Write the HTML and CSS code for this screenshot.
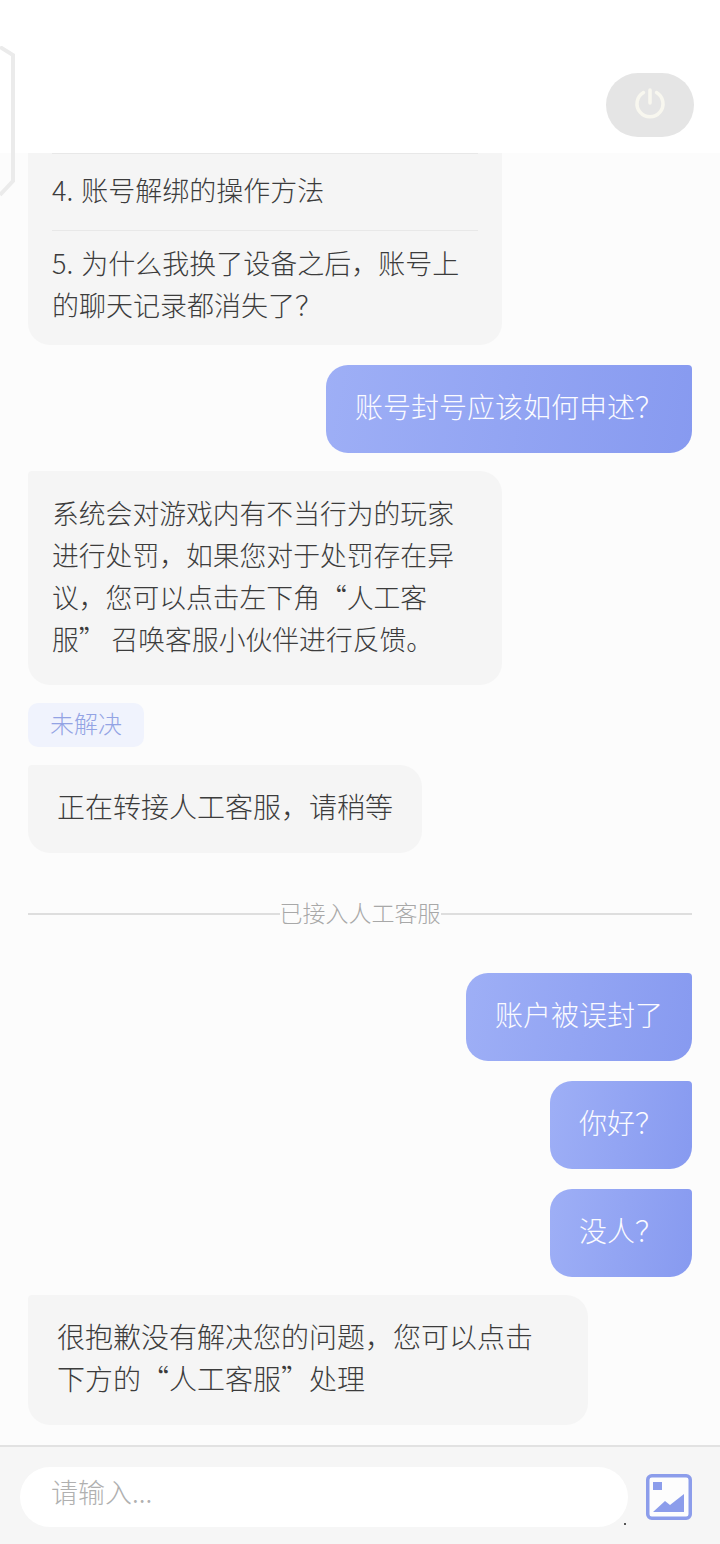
FILE: index.html
```html
<!DOCTYPE html>
<html lang="zh-CN">
<head>
  <meta charset="UTF-8" />
  <meta name="viewport" content="width=device-width, initial-scale=1.0"/>
  <title>客服</title>
  <link rel="stylesheet" href="styles.css">
</head>
<body>
  <div class="page">
    <header class="top-bar">
      <button class="power-btn" aria-label="关闭">
        <svg width="32" height="34" viewBox="0 3 32 34" fill="none" stroke="#f8f7ef" stroke-width="3.5" stroke-linecap="round">
          <path d="M9.5 7.5a13 13 0 1 0 13 0"/>
          <path d="M16 5v13"/>
        </svg>
      </button>
    </header>

    <!-- floating edge tab -->
    <svg class="edge-tab" width="18" height="152" viewBox="0 0 18 152" fill="none" stroke="#ebebeb" stroke-width="4">
      <path d="M0 1l13 8v126L0 149"/>
    </svg>

    <main class="chat">
      <div class="bubble bot list-bubble">
        <div class="list-row">4. 账号解绑的操作方法</div>
        <div class="list-row last">5. 为什么我换了设备之后，账号上的聊天记录都消失了？</div>
      </div>

      <div class="bubble user gap-20">账号封号应该如何申述？</div>

      <div class="bubble bot wide gap-18">系统会对游戏内有不当行为的玩家进行处罚，如果您对于处罚存在异议，您可以点击左下角“人工客服” 召唤客服小伙伴进行反馈。</div>

      <div class="tag gap-18">未解决</div>

      <div class="bubble bot gap-18">正在转接人工客服，请稍等</div>

      <div class="divider"><span>已接入人工客服</span></div>

      <div class="bubble user">账户被误封了</div>
      <div class="bubble user gap-20">你好？</div>
      <div class="bubble user gap-20">没人？</div>

      <div class="bubble bot long gap-18">很抱歉没有解决您的问题，您可以点击下方的“人工客服”处理</div>
    </main>

    <footer class="composer">
      <input class="msg-input" type="text" placeholder="请输入..." />
      <span class="speck"></span>
      <button class="img-btn" aria-label="图片">
        <svg width="46" height="46" viewBox="0 0 46 46" fill="#8c9deb">
          <rect x="1.75" y="1.75" width="42.5" height="42.5" rx="4" fill="#fdfdfd" stroke="#8c9deb" stroke-width="3.5"/>
          <rect x="7" y="8" width="9" height="8"/>
          <path d="M7 38l12-11 5 4 14-11v18z"/>
        </svg>
      </button>
    </footer>
  </div>
</body>
</html>
```

FILE: styles.css
```css
* {
  box-sizing: border-box;
  font-family: "Noto Sans CJK SC", "Noto Sans", sans-serif;
}

body {
  margin: 0;
  background: #fcfcfc;
}

.page {
  position: relative;
  display: flex;
  flex-direction: column;
  width: 720px;
  height: 1544px;
  overflow: hidden;
}

.top-bar {
  flex: none;
  display: flex;
  justify-content: flex-end;
  align-items: flex-start;
  height: 153px;
  padding: 73px 26px 0 0;
  background: #fff;
}

.power-btn {
  display: flex;
  justify-content: center;
  align-items: center;
  width: 88px;
  height: 64px;
  padding: 0;
  border: none;
  border-radius: 32px;
  background: #e5e5e5;
}

.edge-tab {
  position: absolute;
  left: 0;
  top: 46px;
  z-index: 2;
}

.chat {
  flex: 1;
  min-height: 0;
  display: flex;
  flex-direction: column;
  justify-content: flex-end;
  padding: 0 28px 20px;
  overflow: hidden;
}

.chat > * {
  flex: none;
}

/* top padding is smaller than bottom, the CJK font sits low in its line box */
.bubble {
  font-size: 28px;
  font-weight: 300;
  line-height: 42px;
  padding: 20px 29px 26px;
  border-radius: 22px;
}

.bot {
  align-self: flex-start;
  background: #f5f5f5;
  color: #3c3c3c;
  border-top-left-radius: 4px;
}

.user {
  align-self: flex-end;
  background: linear-gradient(100deg, #9eaff6, #879af0);
  color: #fbfbff;
  border-top-right-radius: 4px;
}

.gap-18 {
  margin-top: 18px;
}

.gap-20 {
  margin-top: 20px;
}

.list-bubble {
  width: 474px;
  padding: 20px 24px 19px;
  font-size: 27px;
  word-spacing: 2px;
}

.list-row {
  padding: 15px 0 19px;
  border-top: 1px solid #e8e8e8;
}

.list-row.last {
  padding: 11px 0 0;
}

.wide {
  width: 474px;
  padding: 21px 24px 25px;
  font-size: 26.8px;
}

.long {
  width: 560px;
}

.tag {
  align-self: flex-start;
  width: 116px;
  height: 44px;
  border-radius: 10px;
  background: #f0f3fd;
  color: #93a3e4;
  font-size: 24px;
  font-weight: 300;
  line-height: 40px;
  text-align: center;
}

.divider {
  display: flex;
  align-items: center;
  height: 34px;
  margin: 44px 0 42px;
  color: #a8a8a8;
  font-size: 23px;
  font-weight: 300;
}

.divider span {
  padding-bottom: 4px;
}

.divider::before,
.divider::after {
  content: "";
  flex: 1;
  height: 2px;
  background: #dedede;
}

.composer {
  flex: none;
  position: relative;
  display: flex;
  align-items: center;
  gap: 18px;
  height: 99px;
  padding: 20px 28px 17px 20px;
  border-top: 2px solid #e2e2e2;
  background: #f6f6f6;
}

.msg-input {
  width: 608px;
  height: 60px;
  padding: 0 31px 12px;
  border: none;
  border-radius: 30px;
  background: #fff;
  font-size: 27px;
  font-weight: 300;
  color: #444;
  outline: none;
}

.msg-input::placeholder {
  color: #b0b0b0;
}

.speck {
  position: absolute;
  left: 624px;
  top: 76px;
  width: 2px;
  height: 2px;
  background: #555;
}

.img-btn {
  display: block;
  width: 46px;
  height: 46px;
  padding: 0;
  border: none;
  background: none;
}

.img-btn svg {
  display: block;
}
```
